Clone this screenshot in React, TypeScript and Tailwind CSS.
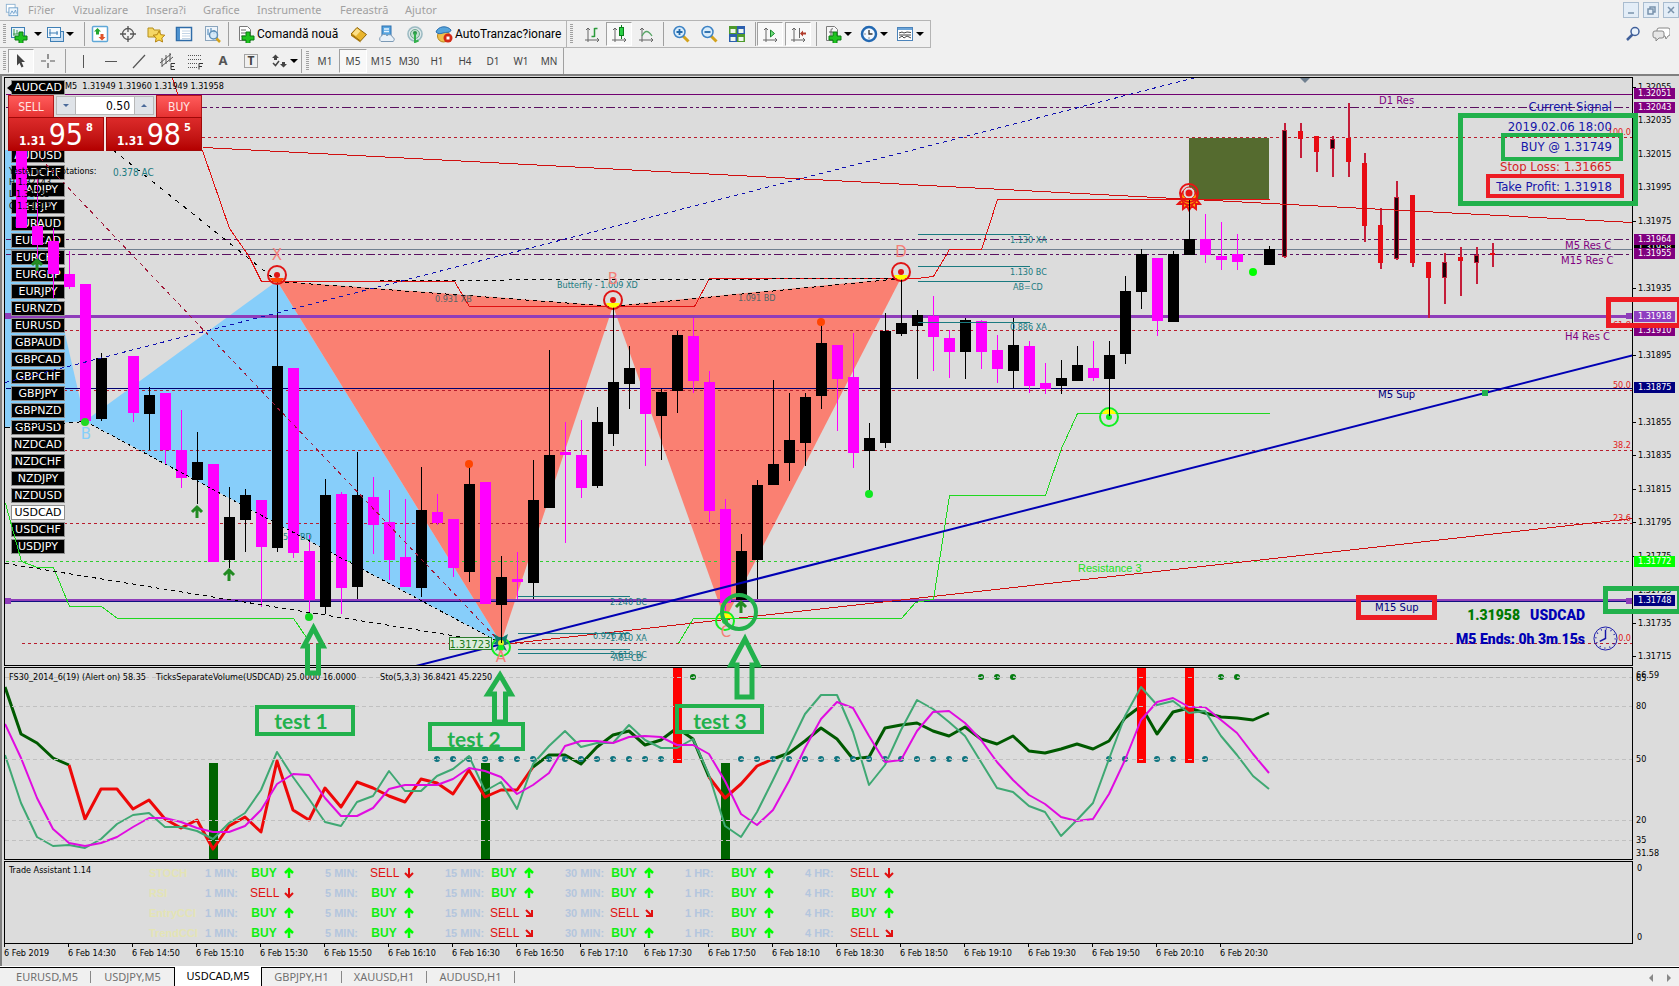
import React from "react";

const menuItems = [
  { label: "Fi?ier", width: "w-[45px]" },
  { label: "Vizualizare", width: "w-[73px]" },
  { label: "Insera?i", width: "w-[57px]" },
  { label: "Grafice", width: "w-[54px]" },
  { label: "Instrumente", width: "w-[83px]" },
  { label: "Fereastră", width: "w-[65px]" },
  { label: "Ajutor", width: "w-[50px]" },
];

const timeframes = ["M1", "M5", "M15", "M30", "H1", "H4", "D1", "W1", "MN"];

const pairs = [
  "AUDCAD", "AUDCHF", "AUDJPY", "AUDNZD", "AUDUSD", "CADCHF", "CADJPY",
  "CHFJPY", "EURAUD", "EURCAD", "EURCHF", "EURGBP", "EURJPY", "EURNZD",
  "EURUSD", "GBPAUD", "GBPCAD", "GBPCHF", "GBPJPY", "GBPNZD", "GBPUSD",
  "NZDCAD", "NZDCHF", "NZDJPY", "NZDUSD", "USDCAD", "USDCHF", "USDJPY",
];

// x, body top, body bottom, high, low, colour (k = black, m = magenta)
type Candle = [number, number, number, number, number, "k" | "m"];

const candles: Candle[] = [
  [21, 140, 228, 140, 228, "m"],
  [37, 226, 245, 178, 273, "m"],
  [53, 241, 274, 228, 298, "m"],
  [69, 274, 287, 251, 289, "m"],
  [85, 284, 421, 284, 421, "m"],
  [101, 358, 419, 353, 421, "k"],
  [133, 356, 413, 356, 422, "m"],
  [149, 395, 414, 387, 450, "k"],
  [165, 393, 450, 393, 465, "m"],
  [181, 450, 478, 410, 488, "m"],
  [197, 462, 480, 432, 504, "k"],
  [213, 464, 562, 464, 562, "m"],
  [229, 517, 560, 487, 568, "k"],
  [245, 495, 520, 489, 552, "k"],
  [261, 500, 547, 500, 607, "m"],
  [277, 366, 548, 281, 552, "k"],
  [293, 368, 553, 368, 558, "m"],
  [309, 551, 600, 535, 618, "m"],
  [325, 495, 607, 479, 614, "k"],
  [341, 494, 588, 492, 614, "m"],
  [357, 495, 587, 452, 599, "k"],
  [373, 497, 525, 477, 554, "m"],
  [389, 522, 560, 490, 580, "m"],
  [405, 557, 587, 499, 587, "m"],
  [421, 510, 588, 467, 597, "k"],
  [437, 512, 523, 494, 525, "m"],
  [453, 519, 568, 519, 577, "m"],
  [469, 484, 572, 465, 582, "k"],
  [485, 482, 604, 482, 604, "m"],
  [501, 577, 605, 556, 643, "k"],
  [517, 579, 582, 552, 599, "m"],
  [533, 500, 583, 460, 599, "k"],
  [549, 455, 508, 350, 508, "k"],
  [565, 452, 455, 422, 543, "m"],
  [581, 455, 488, 420, 498, "m"],
  [597, 422, 486, 407, 488, "k"],
  [613, 382, 434, 306, 446, "k"],
  [629, 368, 384, 346, 409, "k"],
  [645, 368, 414, 368, 466, "m"],
  [661, 392, 416, 389, 460, "k"],
  [677, 335, 391, 331, 413, "k"],
  [693, 336, 381, 318, 393, "m"],
  [709, 382, 511, 371, 522, "m"],
  [725, 509, 603, 499, 618, "m"],
  [741, 551, 600, 534, 600, "k"],
  [757, 485, 560, 480, 599, "k"],
  [773, 464, 485, 380, 485, "k"],
  [789, 440, 463, 393, 481, "k"],
  [805, 397, 443, 393, 466, "k"],
  [821, 343, 396, 322, 409, "k"],
  [837, 345, 379, 345, 431, "m"],
  [853, 377, 453, 333, 468, "m"],
  [869, 438, 451, 423, 494, "k"],
  [885, 331, 443, 313, 448, "k"],
  [901, 323, 334, 278, 336, "k"],
  [917, 315, 326, 310, 379, "k"],
  [933, 316, 337, 296, 371, "m"],
  [949, 338, 352, 330, 378, "m"],
  [965, 320, 352, 318, 379, "k"],
  [981, 321, 352, 320, 369, "m"],
  [997, 350, 369, 335, 383, "m"],
  [1013, 345, 371, 318, 388, "k"],
  [1029, 346, 386, 341, 393, "m"],
  [1045, 383, 389, 363, 394, "m"],
  [1061, 378, 386, 360, 394, "k"],
  [1077, 365, 381, 346, 381, "k"],
  [1093, 368, 378, 341, 381, "m"],
  [1109, 355, 379, 341, 416, "k"],
  [1125, 291, 354, 276, 364, "k"],
  [1141, 254, 292, 249, 309, "k"],
  [1157, 258, 321, 258, 336, "m"],
  [1173, 254, 322, 251, 322, "k"],
  [1189, 239, 255, 200, 255, "k"],
  [1205, 239, 255, 214, 263, "m"],
  [1221, 256, 260, 222, 270, "m"],
  [1237, 254, 262, 234, 270, "m"],
  [1269, 249, 265, 246, 265, "k"],
];

// higher timeframe ghost bars, r = falling, k = rising
const ghostBars: [number, number, number, number, number, "r" | "k"][] = [
  [1285, 130, 257, 123, 258, "k"],
  [1301, 131, 139, 123, 158, "r"],
  [1317, 136, 152, 136, 172, "r"],
  [1333, 139, 149, 136, 177, "k"],
  [1349, 138, 162, 103, 177, "r"],
  [1365, 163, 226, 153, 242, "r"],
  [1381, 225, 263, 208, 269, "r"],
  [1397, 197, 259, 181, 260, "k"],
  [1413, 195, 263, 195, 267, "r"],
  [1429, 262, 278, 262, 318, "r"],
  [1445, 262, 278, 253, 304, "k"],
  [1461, 257, 261, 247, 296, "r"],
  [1477, 255, 263, 247, 284, "k"],
  [1493, 253, 255, 243, 267, "r"],
];

const fibLevels: [number, string][] = [
  [137, "100.0"],
  [330, "61.8"],
  [390, "50.0"],
  [450, "38.2"],
  [523, "23.6"],
  [643, "0.0"],
];

const axisLabels: [number, string][] = [
  [87, "1.32055"],
  [120, "1.32035"],
  [154, "1.32015"],
  [187, "1.31995"],
  [221, "1.31975"],
  [288, "1.31935"],
  [355, "1.31895"],
  [422, "1.31855"],
  [455, "1.31835"],
  [489, "1.31815"],
  [522, "1.31795"],
  [556, "1.31775"],
  [590, "1.31755"],
  [623, "1.31735"],
  [656, "1.31715"],
];

const axisTags: [number, string, string][] = [
  [247, "1.31958", "#000000"],
  [93, "1.32051", "#800080"],
  [107, "1.32043", "#800080"],
  [239, "1.31964", "#800080"],
  [253, "1.31955", "#800080"],
  [330, "1.31910", "#800080"],
  [316, "1.31918", "#8f3dc0"],
  [387, "1.31875", "#000080"],
  [561, "1.31772", "#00ff00"],
  [600, "1.31748", "#000080"],
];

const STEP = 16;
const series = (start: number, values: number[]) =>
  values.map((y, i) => `${start + i * STEP},${y}`).join(" ");

const volumeLine = [
  { start: 5, color: "#005a00", values: [687, 734, 743, 758, 765] },
  {
    start: 69,
    color: "#ee0808",
    values: [
      765, 819, 789, 789, 809, 800, 819, 828, 820, 849, 826, 817, 832, 761, 810,
      820, 788, 807, 782, 788, 796, 802, 779, 783, 794, 770, 797, 790, 790, 767,
    ],
  },
  {
    start: 533,
    color: "#005a00",
    values: [767, 755, 755, 764, 747, 735, 731, 745, 740, 728, 739, 777],
  },
  { start: 709, color: "#ee0808", values: [777, 798, 784, 766, 759] },
  {
    start: 773,
    color: "#005a00",
    values: [
      759, 753, 741, 728, 739, 759, 757, 728, 725, 723, 731, 736, 727, 739, 744,
      736, 751, 753, 749, 744, 749, 741, 718, 706, 734, 712, 708, 713, 717, 718,
      720, 713,
    ],
  },
];

const stochMain = [
  755, 803, 837, 846, 845, 848, 839, 824, 815, 813, 827, 827, 831, 839, 823,
  813, 790, 752, 777, 799, 822, 826, 802, 796, 771, 791, 791, 776, 769, 756,
  791, 782, 809, 764, 746, 731, 747, 743, 743, 725, 740, 748, 748, 739, 775,
  826, 837, 812, 780, 747, 714, 695, 695, 732, 785, 765, 730, 700, 709, 722,
  736, 762, 788, 792, 806, 812, 836, 820, 803, 759, 716, 687, 705, 701, 713,
  711, 736, 755, 776, 789,
];

const stochSignal = [
  724, 758, 798, 829, 843, 846, 843, 837, 827, 818, 818, 822, 828, 832, 832,
  826, 810, 784, 774, 775, 798, 816, 816, 808, 789, 785, 785, 785, 779, 768,
  771, 777, 794, 785, 773, 746, 741, 741, 743, 737, 736, 737, 745, 745, 754,
  781, 814, 825, 810, 781, 748, 719, 702, 708, 736, 762, 760, 731, 712, 711,
  723, 740, 762, 780, 795, 804, 817, 821, 819, 794, 760, 720, 702, 698, 707,
  707, 720, 733, 754, 773,
];

const tealDots = [
  437, 453, 469, 485, 501, 517, 533, 549, 565, 581, 597, 613, 629, 645, 661,
  741, 757, 773, 789, 805, 821, 837, 853, 869, 885, 901, 917, 933, 949, 965,
  1109, 1125, 1157, 1173, 1205,
];
const greenDots = [693, 981, 997, 1013, 1221, 1237];

const assistantFrames = ["1 MIN:", "5 MIN:", "15 MIN:", "30 MIN:", "1 HR:", "4 HR:"];
// B = buy, S = sell, W = weak sell
const assistantRows = [
  { name: "STOCH", signals: "BSBBBS" },
  { name: "RSI", signals: "SBBBBB" },
  { name: "EntryCCI", signals: "BBWWBB" },
  { name: "TrendCCI", signals: "BBWBBW" },
];

const timeLabels = [
  "2019", "14:30", "14:50", "15:10", "15:30", "15:50", "16:10", "16:30",
  "16:50", "17:10", "17:30", "17:50", "18:10", "18:30", "18:50", "19:10",
  "19:30", "19:50", "20:10", "20:30",
];

const chartTabs = [
  { label: "EURUSD,M5", width: "w-[87px]" },
  { label: "USDJPY,M5", width: "w-[83px]" },
  { label: "USDCAD,M5", width: "w-[88px]" },
  { label: "GBPJPY,H1", width: "w-[80px]" },
  { label: "XAUUSD,H1", width: "w-[85px]" },
  { label: "AUDUSD,H1", width: "w-[88px]" },
];

const docPlus = (
  <path d="M9 7h4v4h4v4h-4v4H9v-4H5v-4h4z" fill="#1fc41f" stroke="#0a7a12" strokeWidth="1" />
);

const axes = (
  <path d="M5 3v14M2 15h14M3 5l2-2 2 2M14 13l2 2-2 2" fill="none" stroke="#666" />
);

const glyphs: Record<string, React.ReactNode> = {
  newChart: (
    <>
      <rect x="1.5" y="2.5" width="13" height="10" fill="#e8f3fb" stroke="#3f7fb5" />
      <path d="M4 4v7M7 5v4M3 9h9" stroke="#3a9a4a" />
      {docPlus}
    </>
  ),
  profiles: (
    <>
      <rect x="4.5" y="6.5" width="13" height="10" fill="#c8def2" stroke="#3f7fb5" />
      <rect x="1.5" y="2.5" width="13" height="10" fill="#f3f9fe" stroke="#3f7fb5" />
      <path d="M4 4v7M3 8h9M11 6v4" stroke="#3f7fb5" />
    </>
  ),
  marketWatch: (
    <>
      <rect x="1.5" y="1.5" width="15" height="15" rx="1" fill="#fff" stroke="#5fa8d8" strokeWidth="1.5" />
      <path d="M6.500 3l3.500 3.500H8v3H5v-3H3z" fill="#23a62f" />
      <path d="M11 15.500l-3.500-3.500h2V9h3v3h2z" fill="#e0542a" />
    </>
  ),
  navigator: (
    <g fill="none" stroke="#555">
      <circle cx="9" cy="9" r="5.500" strokeWidth="1.300" />
      <path d="M9 1v6M9 11v6M1 9h6M11 9h6" strokeWidth="1.300" />
    </g>
  ),
  favorites: (
    <>
      <path d="M1 3h5l1 2h6v7H1z" fill="#f5d766" stroke="#b58f1a" />
      <path d="M12 6l1.800 3.700 4 .5-3 2.800.8 4-3.600-2-3.600 2 .8-4-3-2.800 4-.5z" fill="#fbd94a" stroke="#b58414" />
    </>
  ),
  dataWindow: (
    <>
      <rect x="1.5" y="2.5" width="15" height="13" fill="#fff" stroke="#2f6ca8" strokeWidth="1.5" />
      <rect x="2" y="3" width="3" height="12" fill="#4d92cf" />
      <path d="M7 6h8M7 8.500h8M7 11h8M7 13.500h8" stroke="#c2d4e6" />
    </>
  ),
  tester: (
    <>
      <rect x="2.5" y="1.5" width="12" height="14" fill="#eef4fa" stroke="#8ba5bd" />
      <path d="M5 4v6M8 3v5M11 5v4" stroke="#3f7fb5" />
      <path d="M13 13l4 4" stroke="#d3a21c" strokeWidth="2.500" />
      <circle cx="10.500" cy="10" r="4" fill="#cfe6f8" fillOpacity=".8" stroke="#5e8fb8" strokeWidth="1.500" />
    </>
  ),
  newOrder: (
    <>
      <path d="M2.500 1.500h8l3 3v11h-11z" fill="#fff" stroke="#7a7a7a" />
      <path d="M4 5h5M4 8h6M4 11h4" stroke="#666" />
      {docPlus}
    </>
  ),
  metaEditor: (
    <>
      <path d="M1 9l6-6.500 9.500 7-6 6.500z" fill="#e9b52c" stroke="#8f6408" />
      <path d="M2.500 8.500l4.500-5 3.500 2.600-4.500 5z" fill="#fbe089" />
      <path d="M1 9l9.500 7v1.500L1 10.800z" fill="#a97708" />
    </>
  ),
  server: (
    <>
      <rect x="4" y="1" width="9" height="11" fill="#58a6e0" stroke="#2a6fae" />
      <path d="M6 4h5M6 6.500h5" stroke="#e6f4ff" strokeWidth="1.500" />
      <path d="M3 16.500a3 3 0 010-5 3.500 3.500 0 016-.8 3.200 3.200 0 015.500 1.500 2.300 2.300 0 01.5 4.300z" fill="#e9f1f8" stroke="#7d9ab5" />
    </>
  ),
  signals: (
    <>
      <circle cx="9" cy="9" r="8" fill="#dfe9ea" />
      <circle cx="9" cy="9" r="7" fill="none" stroke="#9cbac2" strokeWidth="1.500" />
      <circle cx="9" cy="9" r="4.500" fill="#c3dece" stroke="#6ea98f" />
      <circle cx="9" cy="8" r="2" fill="#2a9447" />
      <path d="M9 8v9l3.500-1.500" fill="none" stroke="#32b04a" strokeWidth="2" />
    </>
  ),
  autoTrade: (
    <>
      <circle cx="8.500" cy="11" r="6" fill="#efc04d" stroke="#b98416" />
      <path d="M1 7c2-6 11-7 15-2 0 3-5 2-8 3s-5 1-7-1z" fill="#57a4da" stroke="#2a6fae" />
      <circle cx="13" cy="13" r="4.500" fill="#d42a16" />
      <rect x="11.500" y="11.500" width="3" height="3" fill="#fff" />
    </>
  ),
  barChart: (
    <>
      {axes}
      <path d="M11.500 3v9M11.500 3.500h3M8.500 11.500h3" fill="none" stroke="#2a9a3a" strokeWidth="1.500" />
    </>
  ),
  candleChart: (
    <>
      {axes}
      <path d="M11.500 0v14" stroke="#0c7d1c" />
      <rect x="9.5" y="2.5" width="4" height="8" fill="#29cf45" stroke="#0c7d1c" />
    </>
  ),
  lineChart: (
    <>
      {axes}
      <path d="M5 11c3-6 6-6 10 0" fill="none" stroke="#58a566" strokeWidth="1.300" />
    </>
  ),
  zoomIn: (
    <>
      <path d="M11 11l5.500 5.500" stroke="#d3a21c" strokeWidth="3" />
      <circle cx="7.500" cy="7" r="5.500" fill="#d8ecfb" stroke="#3c82c4" strokeWidth="1.500" />
      <path d="M4.500 7h6M7.500 4v6" stroke="#2368a8" strokeWidth="1.800" />
    </>
  ),
  zoomOut: (
    <>
      <path d="M11 11l5.500 5.500" stroke="#d3a21c" strokeWidth="3" />
      <circle cx="7.500" cy="7" r="5.500" fill="#d8ecfb" stroke="#3c82c4" strokeWidth="1.500" />
      <path d="M4.500 7h6" stroke="#2368a8" strokeWidth="1.800" />
    </>
  ),
  tile: (
    <>
      <rect x="1" y="1" width="8" height="8" fill="#4e9a2c" />
      <rect x="9" y="1" width="8" height="8" fill="#2c5fae" />
      <rect x="1" y="9" width="8" height="8" fill="#2c5fae" />
      <rect x="9" y="9" width="8" height="8" fill="#4e9a2c" />
      <path d="M2.500 4h5v4h-5zM10.500 4h5v4h-5zM2.500 12h5v4h-5zM10.500 12h5v4h-5z" fill="#eef6ee" />
    </>
  ),
  autoScroll: (
    <>
      {axes}
      <path d="M9.500 5v7l4-3.500z" fill="#6fe07c" stroke="#16862a" />
    </>
  ),
  chartShift: (
    <>
      {axes}
      <path d="M10.500 3v10" stroke="#666" />
      <path d="M11 8.500l3-3v2h3v2h-3v2z" fill="#b03a2a" />
    </>
  ),
  indicators: (
    <>
      <path d="M2.500 1.500h8l3 3v11h-11z" fill="#f7f7f7" stroke="#7a7a7a" />
      <path d="M9 4c-2-1-2 1-2 3v5M5 7h4" fill="none" stroke="#555" />
      {docPlus}
    </>
  ),
  periods: (
    <>
      <circle cx="9" cy="9" r="7" fill="#f3f9ff" stroke="#2268b2" strokeWidth="2.500" />
      <path d="M9 5v4h3.500" fill="none" stroke="#333" strokeWidth="1.300" />
      <path d="M4.500 9h1M9 13.500v-1" stroke="#333" />
    </>
  ),
  templates: (
    <>
      <rect x="1.5" y="2.5" width="15" height="13" fill="#fff" stroke="#4b83ba" />
      <rect x="2" y="3" width="14" height="2" fill="#6ba4d8" />
      <path d="M3 8l3-1 2 1 3-1 4 .5M3 13l3-2 2 2 3-2 4 2M3 10h12" fill="none" stroke="#444" />
    </>
  ),
  cursor: <path d="M5 2l8 8H9.500l2 4.500-2 1-2-4.500L5 13.500z" fill="#444" />,
  crosshair: <path d="M9 2v5M9 11v5M2 9h5M11 9h5" stroke="#555" strokeWidth="1.200" />,
  vline: <path d="M9.500 3v13" stroke="#555" />,
  hline: <path d="M3 9.500h12" stroke="#555" />,
  trend: <path d="M3 16L15 3" stroke="#555" strokeWidth="1.200" />,
  channel: (
    <>
      <path d="M2 11L13 2M4 14L15 5M4 6v9M8 3v9M12 1v9" stroke="#555" />
      <path d="M17 11.500h-4v6h4M13 14.500h3" fill="none" stroke="#333" />
    </>
  ),
  fibo: (
    <>
      <path d="M2 3.500h14M2 7.500h14M2 11.500h9M2 15.500h9" stroke="#555" strokeDasharray="1 1" />
      <path d="M17 11.500h-4v6M13 14.500h3" fill="none" stroke="#333" />
    </>
  ),
  textLabel: (
    <rect x="2.5" y="2.5" width="13" height="13" fill="none" stroke="#555" strokeDasharray="1 1" />
  ),
  shapes: (
    <>
      <path d="M2 6l3.500-3.500L9 6H7v2H4V6zM10 12h2v-2h3v2h2l-3.500 3.500z" fill="#444" />
      <path d="M3 11l2.500 2.500L9 9" fill="none" stroke="#444" strokeWidth="1.500" />
    </>
  ),
  search: (
    <>
      <path d="M3 15l6-6" stroke="#41609a" strokeWidth="2.500" />
      <circle cx="11" cy="6.500" r="4" fill="#eaf3fc" stroke="#41609a" strokeWidth="1.500" />
    </>
  ),
  chat: (
    <>
      <path d="M7 3h9a2 2 0 012 2v4a2 2 0 01-2 2l-2 3-1-3H7a2 2 0 01-2-2V5a2 2 0 012-2z" fill="#fff" stroke="#888" />
      <path d="M3 6h7a2 2 0 012 2v3a2 2 0 01-2 2H7l-3 3v-3H3a2 2 0 01-2-2V8a2 2 0 012-2z" fill="#e6e6e6" stroke="#888" />
    </>
  ),
};

const Glyph = ({ name }: { name: string }) => (
  <svg viewBox="0 0 18 18" className="size-[18px] shrink-0" aria-hidden="true">
    {glyphs[name]}
  </svg>
);

type ToolProps = {
  name: string;
  title: string;
  pressed?: boolean;
  children?: React.ReactNode;
};

const Tool = ({ name, title, pressed, children }: ToolProps) => (
  <button
    aria-label={title}
    className={
      pressed
        ? "relative flex h-6 w-[26px] shrink-0 items-center justify-center border border-[#a0a0a0] border-r-white border-b-white bg-[#f8f8f8]"
        : "relative flex h-6 w-7 shrink-0 items-center justify-center"
    }
  >
    <Glyph name={name} />
    {children}
  </button>
);

const Caret = () => (
  <span className="mx-[2px] size-0 shrink-0 border-x-4 border-t-4 border-x-transparent border-t-black" />
);

const Separator = () => <span className="mx-px h-6 w-px shrink-0 bg-[#a0a0a0]" />;

const Grip = () => (
  <span className="mr-[2px] ml-[3px] h-5 w-[3px] shrink-0 bg-[repeating-linear-gradient(#a0a0a0_0_1px,transparent_1px_2px)]" />
);

const MenuBar = () => (
  <header className="flex h-5 items-center text-[11px] text-[#a0a0a0] font-['Noto_Sans',sans-serif]">
    <svg viewBox="0 0 16 16" className="mx-[5px] size-[14px]" aria-hidden="true">
      <rect x="1.5" y="1.5" width="10" height="9" fill="#fff" stroke="#8ab0d0" />
      <rect x="4.5" y="5.5" width="10" height="9" fill="#eef6fd" stroke="#6a9cc8" />
      <path d="M6 13l2-4 2 3 2-4 1 4" fill="none" stroke="#6a9cc8" />
    </svg>
    <nav className="flex flex-1 pl-1">
      {menuItems.map((item) => (
        <button key={item.label} className={`${item.width} text-left leading-4 whitespace-nowrap`}>
          {item.label}
        </button>
      ))}
    </nav>
    <div className="flex gap-1 text-[#7a93ad]">
      {["M3 9h6", "M3 5h5v5H3zM5 5V3h5v5H8", "M3 3l6 6M9 3l-6 6"].map((d, i) => (
        <button
          key={d}
          aria-label={["Minimize", "Restore", "Close"][i]}
          className="flex size-4 items-center justify-center border border-[#a9bccf] bg-[#e3edf7]"
        >
          <svg viewBox="0 0 12 12" className="size-3">
            <path d={d} fill="none" stroke="currentColor" strokeWidth="1.500" />
          </svg>
        </button>
      ))}
    </div>
  </header>
);

const StandardToolbar = () => (
  <div className="flex h-7 items-center">
    <div className="flex h-7 items-center border-y border-r border-[#b4b4b4] text-[12px] text-black font-['Roboto',sans-serif]">
      <Grip />
      <div className="flex w-[75px] items-center pl-[2px]">
        <button aria-label="New chart" className="flex w-9 items-center gap-1">
          <Glyph name="newChart" />
          <Caret />
        </button>
        <button aria-label="Profiles" className="flex items-center">
          <Glyph name="profiles" />
          <Caret />
        </button>
      </div>
      <Separator />
      <Tool name="marketWatch" title="Market watch" />
      <Tool name="navigator" title="Navigator" />
      <Tool name="favorites" title="Favorites" />
      <Tool name="dataWindow" title="Data window" />
      <Tool name="tester" title="Strategy tester" />
      <span className="w-px" />
      <Separator />
      <button className="flex w-[115px] items-center gap-[2px] pl-[7px] whitespace-nowrap">
        <Glyph name="newOrder" />
        Comandă nouă
      </button>
      <Tool name="metaEditor" title="MetaEditor" />
      <Tool name="server" title="Virtual hosting" />
      <Tool name="signals" title="Signals" />
      <button className="flex w-[137px] items-center gap-[2px] pl-[6px] whitespace-nowrap">
        <Glyph name="autoTrade" />
        AutoTranzac?ionare
      </button>
    </div>
    <div className="flex h-7 items-center border-y border-r border-[#b4b4b4]">
      <Grip />
      <span className="w-[3px]" />
      <Tool name="barChart" title="Bar chart" />
      <Tool name="candleChart" title="Candlesticks" pressed />
      <Tool name="lineChart" title="Line chart" />
      <span className="w-[2px]" />
      <Separator />
      <span className="w-[2px]" />
      <Tool name="zoomIn" title="Zoom in" />
      <Tool name="zoomOut" title="Zoom out" />
      <Tool name="tile" title="Tile windows" />
      <span className="w-[3px]" />
      <Separator />
      <Tool name="autoScroll" title="Auto scroll" pressed />
      <span className="w-[2px]" />
      <Tool name="chartShift" title="Chart shift" pressed />
      <span className="w-1" />
      <Separator />
      <button aria-label="Indicators" className="flex w-9 items-center pl-[6px]">
        <Glyph name="indicators" />
        <Caret />
      </button>
      <button aria-label="Periods" className="flex w-9 items-center pl-[6px]">
        <Glyph name="periods" />
        <Caret />
      </button>
      <button aria-label="Templates" className="flex w-10 items-center pl-[6px]">
        <Glyph name="templates" />
        <Caret />
      </button>
    </div>
    <div className="ml-auto flex pr-1">
      <Tool name="search" title="Search" />
      <Tool name="chat" title="Community" />
    </div>
  </div>
);

const DrawingToolbar = () => (
  <div className="flex h-[26px] items-center text-[#444] font-['Noto_Sans',sans-serif]">
    <Grip />
    <div className="flex items-center">
      <Tool name="cursor" title="Cursor" pressed />
      <Tool name="crosshair" title="Crosshair" />
      <span className="w-[2px]" />
      <Separator />
      <span className="w-[2px]" />
      <Tool name="vline" title="Vertical line" />
      <Tool name="hline" title="Horizontal line" />
      <Tool name="trend" title="Trendline" />
      <Tool name="channel" title="Equidistant channel" />
      <Tool name="fibo" title="Fibonacci retracement" />
      <button className="h-6 w-7 text-[13px] font-bold text-[#555]">A</button>
      <Tool name="textLabel" title="Text label">
        <span className="absolute text-[12px] font-bold">T</span>
      </Tool>
      <button aria-label="Arrows" className="flex h-6 items-center pl-[5px]">
        <Glyph name="shapes" />
        <Caret />
      </button>
    </div>
    <Separator />
    <Grip />
    <div className="flex h-full items-center border-r border-[#a0a0a0]">
      {timeframes.map((tf) => (
        <button
          key={tf}
          className={
            tf === "M5"
              ? "h-6 w-7 border border-[#a0a0a0] border-r-white border-b-white bg-[#f8f8f8] text-[10px]"
              : "h-6 w-7 text-[10px]"
          }
        >
          {tf}
        </button>
      ))}
    </div>
  </div>
);

type LabelProps = {
  x: number;
  y: number;
  fill?: string;
  className?: string;
  anchor?: "start" | "middle" | "end";
  children: React.ReactNode;
};

const Label = ({ x, y, fill = "#000", className = "text-[9px]", anchor = "start", children }: LabelProps) => (
  <text x={x} y={y} fill={fill} className={className} textAnchor={anchor} dominantBaseline="central">
    {children}
  </text>
);

type RingProps = { x: number; y: number; color: string; core: string; up?: boolean };

// pivot marker, the core colour shows on the side of the wick
const Ring = ({ x, y, color, core, up }: RingProps) => (
  <g>
    <path
      d={up ? `M${x - 7} ${y - 3}a7.500 7.500 0 0114 0z` : `M${x - 7} ${y + 3}a7.500 7.500 0 0014 0z`}
      fill={core}
    />
    <circle cx={x} cy={y} r="9" fill="none" stroke={color} strokeWidth="2" />
    <circle cx={x} cy={y} r="3" fill={color} />
  </g>
);

const UpArrow = ({ x, y }: { x: number; y: number }) => (
  <path
    d={`M${x - 5} ${y}L${x} ${y - 5}L${x + 5} ${y}M${x} ${y - 4}V${y + 6}`}
    fill="none"
    stroke="#228b22"
    strokeWidth="3"
  />
);

const ChartBase = () => (
  <svg className="absolute inset-0 size-full" aria-hidden="true">
    <g transform="translate(-5 -78)">
      <polygon points="5,150 23,150 85,421 5,427" fill="#87cefa" />
      <polygon points="85,421 277,281 501,643" fill="#87cefa" />
      <polygon points="277,281 501,643 613,306" fill="#fa8072" />
      <polygon points="613,306 725,620 901,278" fill="#fa8072" />
      <rect x="1189" y="138" width="80" height="61" fill="#556b2f" />
      <g shapeRendering="crispEdges" transform="translate(.5 .5)">
        <path d="M5 94H4000" stroke="#700070" />
        <g stroke="#5a1060" strokeDasharray="9 3 3 3 3 3">
          <path d="M5 107H4000M5 239H4000M5 254H4000" />
        </g>
        <path d="M5 249H4000" stroke="#708090" />
        <g stroke="#b81c2c" strokeDasharray="3 3">
          {fibLevels.map(([y]) => (
            <path key={y} d={`M21 ${y}H4000`} />
          ))}
        </g>
        <path d="M5 316H4000" stroke="#8f3dba" strokeWidth="3" />
        <path d="M5 388H4000" stroke="#000070" />
        <path d="M5 561H4000" stroke="#32cd32" strokeDasharray="3 3" />
        <path d="M5 599H4000M5 600H4000" stroke="#8f3dba" />
        <path d="M5 601H4000" stroke="#101080" />
      </g>
      <path d="M5 313h6v6H5zM5 598h6v6H5z" fill="#8f3dba" />
    </g>
  </svg>
);

const ChartObjects = () => (
  <svg className="pointer-events-none absolute inset-0 size-full" aria-hidden="true">
    <g transform="translate(-5 -78)">
      <g shapeRendering="crispEdges">
        {candles.map(([x, top, bottom, high, low, tone]) => (
          <g key={x} fill={tone === "k" ? "#000" : "#ff00ff"}>
            <rect x={x} y={high} width="1" height={low - high} />
            <rect x={x - 5} y={top} width="11" height={bottom - top} />
          </g>
        ))}
        {ghostBars.map(([x, top, bottom, high, low, tone]) => (
          <g key={x}>
            <rect x={x - 1} y={high} width="2" height={low - high} fill="#c41e3a" />
            <rect x={x - 3} y={top} width="5" height={bottom - top} fill={tone === "r" ? "#e80c14" : "#c41e3a"} />
            {tone === "k" && (
              <rect x={x - 2} y={top + 1} width="3" height={bottom - top - 2} fill="#200008" />
            )}
          </g>
        ))}
      </g>

      <g fill="none" shapeRendering="crispEdges" transform="translate(.5 .5)">
        <path d="M203 147L1632 222" stroke="#d01010" />
        <path d="M501 644L1632 518" stroke="#d01010" />
        <path d="M172 78L177 93L203 153L229 228L248 255L261 281H454L469 306H694L709 278H917L933 276L949 249H981L997 199H1269" stroke="#e01010" />
        <path d="M5 503L21 561L37 567H53L69 606H101L117 618H293L306 637M678 643L693 618H901L915 602L933 599L949 495H1045L1061 448L1077 413H1269" stroke="#20d820" />
        <path d="M97 137L277 281" stroke="#000" strokeDasharray="4 6" />
        <path d="M277 281L613 306L901 278M380 280L901 278M5 427L85 421M5 563L501 643" stroke="#000" strokeDasharray="4 4" />
        <path d="M85 421L501 643" stroke="#000" strokeDasharray="3 3" />
        <path d="M40 158L501 643" stroke="#a01838" strokeDasharray="4 4" />
        <path d="M5 382L1195 77" stroke="#1010b0" strokeDasharray="4 4" />
        <path d="M917 234H1029M917 266H1029M917 281H1029M917 322H1029M517 596H629M517 633H629M517 649H629M517 653H629" stroke="#1a7a80" />
      </g>
      <path d="M412 667L1634 355" stroke="#0000b4" strokeWidth="2" />
      <rect x="1482" y="390" width="6" height="6" fill="#22b14c" />
      <path d="M1300 78h10l-5 5z" fill="#708090" />
      <path d="M7 88l5-4v8z" fill="#000" />

      <circle cx="85" cy="422" r="4" fill="#22d822" />
      <circle cx="309" cy="617" r="4" fill="#10d820" />
      <circle cx="869" cy="494" r="4" fill="#10e820" />
      <circle cx="1253" cy="272" r="4" fill="#00ff00" />
      <circle cx="469" cy="464" r="4" fill="#ff4500" />
      <circle cx="821" cy="322" r="4" fill="#ff4500" />
      <Ring x={277} y={275} color="#e01414" core="#ff4500" />
      <Ring x={613} y={300} color="#e01414" core="#ffff00" />
      <Ring x={901} y={272} color="#e01414" core="#ffff00" />
      <Ring x={1109} y={417} color="#10f020" core="#ffff00" up />
      <Ring x={501} y={647} color="#10f020" core="#ffff00" up />
      <Ring x={725} y={621} color="#10f020" core="#ffff00" up />
      <path d="M494 634l5 3h4l5-3-2 7 3 3-5 1 3 6-6-3-6 3 3-6-5-1 3-3z" fill="#0e7c70" />
      <circle cx="501" cy="643" r="3" fill="#d8f020" />
      <circle cx="501" cy="648" r="3" fill="#10f020" />
      <g fill="none" stroke="#e81414">
        <path d="M1181 201l-3 3 5 0 0 5 4-3 2 4 3-4 4 3 0-5 4 0-3-4" fill="#ffb000" strokeWidth="2" />
        <circle cx="1189" cy="197" r="8" fill="#ffb000" strokeWidth="2" />
        <circle cx="1189" cy="193" r="9" strokeWidth="2" />
        <circle cx="1189" cy="193" r="6" fill="#dcdcdc" strokeWidth="1" />
        <circle cx="1189" cy="193" r="2" fill="#e81414" strokeWidth="3" />
        <path d="M1183 199h12" strokeWidth="2" />
      </g>
      <path d="M501.500 605V643M613.500 308V382M901.500 280V323M1189.500 200V239M1109.500 379V416" stroke="#000" />
      <UpArrow x={197} y={512} />
      <UpArrow x={229} y={575} />
      <UpArrow x={37} y={265} />
      <UpArrow x={741} y={607} />

      <g className="font-['DejaVu_Sans_Condensed','Noto_Sans',sans-serif]">
        <Label x={65} y={86}>M5&nbsp; 1.31949 1.31960 1.31949 1.31958</Label>
        <Label x={9} y={171}>Yesterday quotations:</Label>
        <Label x={9} y={182}>H 1.32143</Label>
        <Label x={9} y={194}>L 1.31285</Label>
        <Label x={9} y={206}>C 1.31312</Label>
        <Label x={113} y={172} fill="#1a7a80" className="text-[10px]">0.378 AC</Label>
        <Label x={283} y={537} fill="#1a7a80">5</Label>
        <Label x={300} y={537} fill="#1a7a80">BD</Label>
        <Label x={435} y={299} fill="#50686a">0.931 XB</Label>
        <Label x={557} y={285} fill="#1a7a80">Butterfly - 1.009 XD</Label>
        <Label x={738} y={298} fill="#50686a">1.091 BD</Label>
        <Label x={1010} y={240} fill="#1a7a80">1.130 XA</Label>
        <Label x={1010} y={272} fill="#1a7a80">1.130 BC</Label>
        <Label x={1013} y={287} fill="#1a7a80">AB=CD</Label>
        <Label x={1010} y={327} fill="#1a7a80">0.886 XA</Label>
        <Label x={610} y={602} fill="#1a7a80">2.240 BC</Label>
        <Label x={593} y={636} fill="#1a7a80">0.926 XC</Label>
        <Label x={610} y={638} fill="#1a7a80">1.410 XA</Label>
        <Label x={610} y={655} fill="#1a7a80">2.618 BC</Label>
        <Label x={613} y={658} fill="#1a7a80">AB=CD</Label>
        <rect x="449.5" y="637.5" width="42" height="12" fill="#dcecdc" stroke="#2a7a2a" />
        <Label x={470} y={644} fill="#1a7a1a" anchor="middle" className="text-[11px]">1.31723</Label>
      </g>
      <g className="font-['DejaVu_Sans',sans-serif]">
        <Label x={277} y={255} fill="#f48078" anchor="middle" className="text-[15px]">X</Label>
        <Label x={613} y={279} fill="#f48078" anchor="middle" className="text-[15px]">B</Label>
        <Label x={901} y={252} fill="#f48078" anchor="middle" className="text-[15px]">D</Label>
        <Label x={501} y={657} fill="#f48078" anchor="middle" className="text-[15px]">A</Label>
        <Label x={726} y={632} fill="#f48078" anchor="middle" className="text-[15px]">C</Label>
        <Label x={86} y={434} fill="#87cefa" anchor="middle" className="text-[15px]">B</Label>
        <Label x={1379} y={100} fill="#800080" className="text-[10px]">D1 Res</Label>
        <Label x={1565} y={245} fill="#800080" className="text-[10px]">M5 Res C</Label>
        <Label x={1561} y={260} fill="#800080" className="text-[10px]">M15 Res C</Label>
        <Label x={1565} y={336} fill="#800080" className="text-[10px]">H4 Res C</Label>
        <Label x={1378} y={394} fill="#000080" className="text-[10px]">M5 Sup</Label>
        <Label x={1375} y={607} fill="#000080" className="text-[10px]">M15 Sup</Label>
      </g>
      <g className="font-['Liberation_Sans',sans-serif]">
        <Label x={1078} y={568} fill="#20e020" className="text-[11px]">Resistance 3</Label>
      </g>
    </g>
  </svg>
);

const OneClickTrading = () => (
  <form className="absolute top-[17px] left-[3px] w-[194px] text-white font-['DejaVu_Sans_Condensed','Noto_Sans',sans-serif]">
    <div className="flex h-[22px] justify-between bg-[#dcdcdc]">
      <button type="button" className="w-[46px] border border-b-0 border-[#b01818] bg-linear-to-b from-[#ff5a5a] to-[#e63232] text-[12px] text-[#ffe4e4]">
        SELL
      </button>
      <div className="mt-px flex h-[19px] w-[98px] border border-[#b8b8b8] bg-white">
        <button type="button" aria-label="Decrease lots" className="flex w-[19px] items-center justify-center border-r border-[#b8b8b8] bg-[#dfe3e8]">
          <span className="border-x-3 border-t-3 border-x-transparent border-t-[#4a6a9a]" />
        </button>
        <input
          aria-label="Lots"
          defaultValue="0.50"
          className="w-0 flex-1 bg-white pr-1 text-right text-[12px] text-black"
        />
        <button type="button" aria-label="Increase lots" className="flex w-[19px] items-center justify-center border-l border-[#b8b8b8] bg-[#dfe3e8]">
          <span className="border-x-3 border-b-3 border-x-transparent border-b-[#4a6a9a]" />
        </button>
      </div>
      <button type="button" className="w-[46px] border border-b-0 border-[#b01818] bg-linear-to-b from-[#ff5a5a] to-[#e63232] text-[12px] text-[#ffe4e4]">
        BUY
      </button>
    </div>
    <div className="flex h-[34px] gap-[2px] bg-[#f4e4e4]">
      {[
        ["95", "8"],
        ["98", "5"],
      ].map(([pips, tenth]) => (
        <div
          key={pips}
          className="flex flex-1 items-end justify-center gap-[3px] border border-[#a00808] bg-linear-to-b from-[#dc2a2a] to-[#b40000] leading-none"
        >
          <span className="pb-[3px] text-[12px] font-bold">1.31</span>
          <span className="text-[30px]">{pips}</span>
          <span className="self-start pt-1 text-[11px] font-bold">{tenth}</span>
        </div>
      ))}
    </div>
  </form>
);

const SignalPanel = () => (
  <>
    <div className="absolute top-[19px] right-[20px] flex flex-col items-end text-[13px] leading-5 whitespace-nowrap text-[#1414a8] font-['DejaVu_Sans_Condensed','Noto_Sans',sans-serif]">
      <span>Current Signal</span>
      <span>2019.02.06 18:00</span>
      <span>BUY @ 1.31749</span>
      <span className="text-[#d41c24]">Stop Loss: 1.31665</span>
      <span>Take Profit: 1.31918</span>
    </div>
    <div className="absolute top-[55px] right-[9px] h-7 w-[122px] border-4 border-[#22b14c]" />
    <div className="absolute top-[96px] right-[8px] h-6 w-[138px] border-4 border-[#ed1c24]" />
    <div className="absolute top-[35px] -right-[6px] h-[93px] w-[180px] border-5 border-[#22b14c]" />
  </>
);

const BarTimer = () => (
  <div className="absolute top-[525px] right-[2px] flex items-end gap-2 font-['Roboto',sans-serif]">
    <div className="text-right text-[14px] leading-6 font-black whitespace-nowrap text-[#0000b4]">
      <div>
        <span className="mr-[10px] text-[#007a00]">1.31958</span>
        USDCAD
      </div>
      <div>M5 Ends: 0h 3m 15s</div>
    </div>
    <svg viewBox="0 0 26 26" className="mr-3 size-[25px]" aria-hidden="true">
      <circle cx="13" cy="13" r="12" fill="none" stroke="#1414a8" />
      <circle cx="13" cy="13" r="10" fill="none" stroke="#1414a8" strokeWidth="1.500" strokeDasharray="1 4.236" />
      <path d="M13 4v9l-6 3" fill="none" stroke="#1414a8" strokeWidth="1.500" />
    </svg>
  </div>
);

// fibo captions and line handles sit on the right edge of the plot
const EdgeLabels = () => (
  <svg className="pointer-events-none absolute inset-y-0 right-0 h-full w-12 font-['DejaVu_Sans_Condensed','Noto_Sans',sans-serif]">
    {fibLevels.map(([y, text]) => (
      <Label key={text} x={47} y={y - 83} fill="#e02020" anchor="end">
        {text}
      </Label>
    ))}
    <path d="M42 235h6v6h-6zM42 520h6v6h-6z" fill="#8f3dba" />
  </svg>
);

const PriceAxis = () => (
  <div className="relative w-[46px] shrink-0">
    <svg className="absolute inset-0 size-full font-['DejaVu_Sans_Condensed','Noto_Sans',sans-serif]">
      <g transform="translate(-1633 -77)">
        {axisLabels.map(([y, text]) => (
          <g key={text}>
            <rect x="1633" y={y} width="3" height="1" fill="#000" />
            <Label x={1638} y={y}>{text}</Label>
          </g>
        ))}
        {axisTags.map(([y, text, fill]) => (
          <g key={text}>
            <rect x="1634" y={y - 5} width="41" height="11" fill={fill} />
            <Label x={1638} y={y} fill="#fff">{text}</Label>
          </g>
        ))}
      </g>
    </svg>
  </div>
);

const Dot = ({ x, y, color }: { x: number; y: number; color: string }) => (
  <g>
    <circle cx={x} cy={y} r="3" fill={color} />
    <circle cx={x + 1} cy={y} r="1" fill="#9cc4c0" />
  </g>
);

const IndicatorPlot = () => (
  <svg className="absolute inset-0 size-full" role="img" aria-label="Indicators">
    <g transform="translate(-5 -668)">
      <g fill="#006400">
        <rect x="209" y="763" width="9" height="97" />
        <rect x="481" y="763" width="9" height="97" />
        <rect x="721" y="763" width="9" height="97" />
      </g>
      <g fill="none" strokeLinejoin="round">
        {volumeLine.map((part) => (
          <polyline key={part.start} points={series(part.start, part.values)} stroke={part.color} strokeWidth="3" />
        ))}
      </g>
      <g fill="#ff0000">
        <rect x="673" y="668" width="9" height="95" />
        <rect x="1137" y="668" width="9" height="95" />
        <rect x="1185" y="668" width="9" height="95" />
      </g>
      {tealDots.map((x) => (
        <Dot key={x} x={x} y={759} color="#0f7480" />
      ))}
      {greenDots.map((x) => (
        <Dot key={x} x={x} y={677} color="#067d10" />
      ))}
      <g fill="none" strokeLinejoin="round">
        <polyline points={series(5, stochMain)} stroke="#3fa873" strokeWidth="2" />
        <polyline points={series(5, stochSignal)} stroke="#e00ce0" strokeWidth="2" />
      </g>
      <path
        d="M5 677.500H4000M5 706.500H4000M5 759.500H4000M5 820.500H4000M5 840.500H4000"
        stroke="#c0c0c0"
        strokeDasharray="4 3"
      />
      <g className="font-['DejaVu_Sans_Condensed','Noto_Sans',sans-serif]">
        <Label x={9} y={677}>FS30_2014_6(19) (Alert on) 58.35</Label>
        <Label x={156} y={677}>TicksSeparateVolume(USDCAD) 25.0000 16.0000</Label>
        <Label x={380} y={677}>Sto(5,3,3) 36.8421 45.2250</Label>
      </g>
    </g>
  </svg>
);

const IndicatorAxis = () => (
  <div className="relative w-[46px] shrink-0">
    <svg className="absolute inset-0 size-full font-['DejaVu_Sans_Condensed','Noto_Sans',sans-serif]">
      <g transform="translate(-1633 -667)">
        <Label x={1636} y={675}>66.59</Label>
        <Label x={1636} y={678}>65</Label>
        <Label x={1636} y={706}>80</Label>
        <Label x={1636} y={759}>50</Label>
        <Label x={1636} y={820}>20</Label>
        <Label x={1636} y={840}>35</Label>
        <Label x={1636} y={853}>31.58</Label>
      </g>
    </svg>
  </div>
);

// hand drawn notes lying across both chart windows
const Notes = () => (
  <>
    <svg className="pointer-events-none absolute top-0 left-0 h-[700px] w-[900px]" aria-hidden="true">
      <g transform="translate(0 -76)" fill="none" stroke="#22b14c" strokeWidth="5">
        <path d="M313.500 628L323 646H318.500V673H307.500V646H304z" />
        <path d="M500 675L511 694H505.500V722H494.500V694H488z" />
        <path d="M745 639L758 665H752V697H737V665H731z" />
        <circle cx="739" cy="612" r="17" strokeWidth="4" />
        <g strokeWidth="4">
          <rect x="257" y="707" width="96" height="27" />
          <rect x="430" y="724" width="93" height="25" />
          <rect x="677" y="706" width="85" height="26" />
        </g>
        <g stroke="none" className="font-['Lato',sans-serif] font-bold">
          <Label x={301} y={720} fill="#22b14c" anchor="middle" className="text-[21px]">test 1</Label>
          <Label x={474} y={738} fill="#22b14c" anchor="middle" className="text-[21px]">test 2</Label>
          <Label x={720} y={720} fill="#22b14c" anchor="middle" className="text-[21px]">test 3</Label>
        </g>
      </g>
    </svg>
    <div className="absolute top-[519px] right-[242px] h-[25px] w-[81px] border-5 border-[#ed1c24]" />
    <div className="absolute top-[221px] right-0 h-[31px] w-[73px] border-5 border-r-2 border-[#ed1c24]" />
    <div className="absolute top-[510px] right-0 h-7 w-[76px] border-5 border-r-2 border-[#22b14c]" />
  </>
);

const SignalArrow = ({ signal }: { signal: string }) => {
  if (signal === "B") {
    return (
      <svg viewBox="0 0 12 12" className="size-3" aria-hidden="true">
        <path d="M2 6l4-4 4 4M6 3v8" fill="none" stroke="#00ff00" strokeWidth="2.500" />
      </svg>
    );
  }
  return (
    <svg viewBox="0 0 12 12" className="size-3" aria-hidden="true">
      <path
        d={signal === "S" ? "M2 6l4 4 4-4M6 9V1" : "M3 3l6 6M9 3v6H3"}
        fill="none"
        stroke="#e01010"
        strokeWidth="2"
      />
    </svg>
  );
};

const TradeAssistant = () => (
  <div className="flex">
    <div className="relative h-[83px] flex-1 border border-black">
      <h2 className="absolute top-[2px] left-[4px] text-[9px] font-['DejaVu_Sans_Condensed','Noto_Sans',sans-serif]">
        Trade Assistant 1.14
      </h2>
      <table className="mt-px ml-[144px] w-[776px] table-fixed border-collapse text-[11px] leading-5 whitespace-nowrap font-['Liberation_Sans',sans-serif]">
        <tbody>
          {assistantRows.map((row) => (
            <tr key={row.name} className="h-5">
              <th className="w-14 p-0 text-left text-[11px] font-bold text-[#e4e4b4]">{row.name}</th>
              {assistantFrames.map((frame, i) => (
                <React.Fragment key={frame}>
                  <td className="w-[45px] p-0 font-bold text-[#b4c6de]">{frame}</td>
                  <td
                    className={
                      row.signals[i] === "B"
                        ? "w-7 p-0 text-center text-[12px] font-bold text-[#12ee12]"
                        : "w-7 p-0 text-center text-[12px] text-[#e01010]"
                    }
                  >
                    {row.signals[i] === "B" ? "BUY" : "SELL"}
                  </td>
                  <td className="w-[47px] p-0 pl-[5px]">
                    <SignalArrow signal={row.signals[i]} />
                  </td>
                </React.Fragment>
              ))}
            </tr>
          ))}
        </tbody>
      </table>
    </div>
    <div className="flex w-[46px] flex-col justify-between pt-px pb-px pl-1 text-[9px] leading-3 font-['DejaVu_Sans_Condensed','Noto_Sans',sans-serif]">
      <span>0</span>
      <span>0</span>
    </div>
  </div>
);

const TimeAxis = () => (
  <div className="-mt-px flex h-[22px] text-[9px] leading-3 whitespace-nowrap font-['DejaVu_Sans_Condensed','Noto_Sans',sans-serif]">
    {timeLabels.map((label) => (
      <div key={label} className="w-16">
        <div className="h-[3px] w-px bg-black" />6 Feb {label}
      </div>
    ))}
  </div>
);

const ChartTabs = () => (
  <nav className="flex h-5 shrink-0 items-stretch border-t border-black bg-[#f0f0f0] pl-1 text-[11px] text-[#707070] font-['Noto_Sans',sans-serif]">
    {chartTabs.map((tab) =>
      tab.label === "USDCAD,M5" ? (
        <button key={tab.label} className={`${tab.width} -mt-px border border-t-0 border-black bg-white pb-px leading-4 text-black`}>
          {tab.label}
        </button>
      ) : (
        <button key={tab.label} className={`${tab.width} flex items-center justify-center pb-px leading-4`}>
          <span className="flex-1">{tab.label}</span>
          {tab.label !== "USDJPY,M5" && <span className="h-3 w-px bg-[#888]" />}
        </button>
      )
    )}
    <div className="ml-auto flex items-center gap-[14px] pr-2">
      <button aria-label="Scroll left" className="border-y-4 border-r-4 border-y-transparent border-r-[#888]" />
      <button aria-label="Scroll right" className="border-y-4 border-l-4 border-y-transparent border-l-[#888]" />
    </div>
  </nav>
);

const App = () => {
  return (
    <div className="flex min-h-screen flex-col overflow-hidden bg-[#f0f0f0] text-black">
      <MenuBar />
      <StandardToolbar />
      <DrawingToolbar />
      <main className="relative flex flex-1 flex-col gap-px border-t-2 border-l-2 border-[#808080] bg-[#dcdcdc] pt-px pl-[2px]">
        <section className="flex min-h-[589px] flex-1">
          <div className="relative flex-1 overflow-hidden border border-black">
            <ChartBase />
            <div className="absolute top-[2px] left-[6px] flex flex-col gap-[2px] text-[11px] font-['DejaVu_Sans',sans-serif]">
              {pairs.map((pair) => (
                <button
                  key={pair}
                  className={
                    pair === "USDCAD"
                      ? "h-[15px] w-[54px] border border-[#909090] bg-white leading-[13px] text-black"
                      : "h-[15px] w-[54px] border border-[#909090] bg-black leading-[13px] text-white"
                  }
                >
                  {pair}
                </button>
              ))}
            </div>
            <ChartObjects />
            <EdgeLabels />
            <OneClickTrading />
            <BarTimer />
          </div>
          <PriceAxis />
        </section>
        <section className="flex h-[193px]">
          <div className="relative flex-1 overflow-hidden border border-black">
            <IndicatorPlot />
          </div>
          <IndicatorAxis />
        </section>
        <TradeAssistant />
        <TimeAxis />
        <div className="pointer-events-none absolute inset-y-0 -left-[2px] right-0">
          <Notes />
          <div className="absolute top-[2px] right-[47px]">
            <SignalPanel />
          </div>
        </div>
      </main>
      <div className="h-px bg-white" />
      <ChartTabs />
    </div>
  );
};

export default App;
